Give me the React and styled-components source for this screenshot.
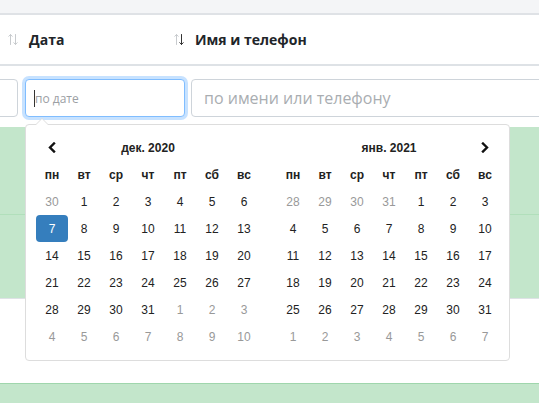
import React from "react";
import styled, { createGlobalStyle } from "styled-components";

const Global = createGlobalStyle`
  html, body { margin: 0; padding: 0; background: #fff; }
  body { overflow: hidden; width: 539px; height: 403px; font-family: "Open Sans", "Noto Sans", sans-serif; color: #212529; }
  * { box-sizing: border-box; }
`;

const Page = styled.div`
  width: 539px;
  height: 403px;
  overflow: hidden;
  position: relative;
`;

const TopBand = styled.div`
  height: 15px;
  background: #f4f5f7;
  border-bottom: 2px solid #dfe2e6;
`;

const HeadRow = styled.div`
  display: flex;
  align-items: center;
  height: 51px;
  padding-left: 8px;
  border-bottom: 2px solid #dee2e6;
`;

const HeadCell = styled.div`
  display: flex;
  align-items: center;
  gap: 11px;
  width: ${(p) => (p.$w ? `${p.$w}px` : "auto")};
  font-size: 14px;
  font-weight: 700;
  color: #212529;
`;

const FilterRow = styled.div`
  display: flex;
  align-items: flex-start;
  padding: 13px 0 10px;
  margin-left: -22px;
  gap: 7px;
`;

const Input = styled.input`
  height: 38px;
  width: ${(p) => (p.$w ? `${p.$w}px` : "auto")};
  flex: ${(p) => (p.$grow ? "0 0 400px" : "none")};
  border: 1px solid #ced4da;
  border-radius: 4px;
  padding: 0 12px;
  font-family: "Open Sans", sans-serif;
  font-size: 16px;
  color: #495057;
  background: #fff;
  outline: none;
  &::placeholder { color: #a9adb1; }
`;

const DateWrap = styled.div`
  position: relative;
  width: 160px;
  margin-right: -1px;
`;

const DateInput = styled.input`
  width: 160px;
  height: 38px;
  border: 1px solid #80bdff;
  border-radius: 4px;
  box-shadow: 0 0 0 3px rgba(0, 123, 255, 0.22);
  padding: 0 9px;
  font-family: "Open Sans", sans-serif;
  font-size: 12px;
  outline: none;
  caret-color: transparent;
  &::placeholder { color: #9ca0a4; }
`;

const Caret = styled.span`
  position: absolute;
  left: 9px;
  top: 11px;
  width: 1px;
  height: 17px;
  background: #333;
`;

const Picker = styled.div`
  position: absolute;
  top: 45px;
  left: 0;
  width: 485px;
  background: #fff;
  border: 1px solid #ddd;
  border-radius: 4px;
  display: flex;
  gap: 17px;
  padding: 9px 8px 10px 10px;
  z-index: 5;
  font-family: "Liberation Sans", Arial, sans-serif;
  font-size: 12px;
  color: #222;
  &::before {
    content: "";
    position: absolute;
    top: -7px;
    left: 9px;
    border-left: 7px solid transparent;
    border-right: 7px solid transparent;
    border-bottom: 7px solid #ddd;
  }
  &::after {
    content: "";
    position: absolute;
    top: -6px;
    left: 10px;
    border-left: 6px solid transparent;
    border-right: 6px solid transparent;
    border-bottom: 6px solid #fff;
  }
`;

const Month = styled.div`
  display: grid;
  grid-template-columns: repeat(7, 32px);
  grid-auto-rows: 27px;
  width: 224px;
`;

const TitleRow = styled.div`
  grid-column: 1 / -1;
  display: grid;
  grid-template-columns: 32px 1fr 32px;
  align-items: center;
  text-align: center;
  font-weight: 700;
`;

const NavBtn = styled.span`
  display: flex;
  align-items: center;
  justify-content: center;
`;

const Wd = styled.div`
  display: flex;
  align-items: center;
  justify-content: center;
  font-weight: 700;
`;

const Day = styled.div`
  display: flex;
  align-items: center;
  justify-content: center;
  border-radius: 4px;
  color: ${(p) => (p.$sel ? "#fff" : p.$off ? "#999" : "#222")};
  background: ${(p) => (p.$sel ? "#357ebd" : "transparent")};
`;

const BodyRow = styled.div`
  height: ${(p) => p.$h}px;
  background: ${(p) => (p.$green ? "#c3e6cb" : "#fff")};
  border-top: ${(p) => (p.$line ? `1px solid ${p.$line}` : "none")};
`;

const SortIcon = ({ active }) => (
  <svg width="10" height="13" viewBox="0 0 10 13" fill="none" strokeWidth="1" strokeLinecap="round">
    <g stroke="#c8cbce">
      <path d="M2.5 1.5v10M0.8 3.3L2.5 1.5 4.2 3.3" />
    </g>
    <g stroke={active ? "#333" : "#c8cbce"}>
      <path d="M7.5 1.5v10M5.8 9.7L7.5 11.5 9.2 9.7" />
    </g>
  </svg>
);

const Chevron = ({ dir }) => (
  <svg width="8" height="11" viewBox="0 0 8 11" fill="none">
    <path
      d={dir === "left" ? "M6 1.5L2 5.5l4 4" : "M2 1.5l4 4-4 4"}
      stroke="#111"
      strokeWidth="2.4"
      strokeLinecap="square"
    />
  </svg>
);

const WEEK = ["пн", "вт", "ср", "чт", "пт", "сб", "вс"];

const dec = [
  [30, 1, 2, 3, 4, 5, 6],
  [7, 8, 9, 10, 11, 12, 13],
  [14, 15, 16, 17, 18, 19, 20],
  [21, 22, 23, 24, 25, 26, 27],
  [28, 29, 30, 31, 1, 2, 3],
  [4, 5, 6, 7, 8, 9, 10],
];
const jan = [
  [28, 29, 30, 31, 1, 2, 3],
  [4, 5, 6, 7, 8, 9, 10],
  [11, 12, 13, 14, 15, 16, 17],
  [18, 19, 20, 21, 22, 23, 24],
  [25, 26, 27, 28, 29, 30, 31],
  [1, 2, 3, 4, 5, 6, 7],
];

const Calendar = ({ title, rows, left, right, sel }) => (
  <Month>
    <TitleRow>
      <NavBtn>{left && <Chevron dir="left" />}</NavBtn>
      <span>{title}</span>
      <NavBtn>{right && <Chevron dir="right" />}</NavBtn>
    </TitleRow>
    {WEEK.map((w) => (
      <Wd key={w}>{w}</Wd>
    ))}
    {rows.map((r, ri) =>
      r.map((d, di) => {
        const off = (ri === 0 && d > 20) || (ri >= 4 && d < 15);
        return (
          <Day key={`${ri}-${di}`} $off={off} $sel={sel && ri === 1 && di === 0}>
            {d}
          </Day>
        );
      })
    )}
  </Month>
);

export default function App() {
  return (
    <Page>
      <Global />
      <TopBand />
      <HeadRow>
        <HeadCell $w={166}>
          <SortIcon />
          Дата
        </HeadCell>
        <HeadCell>
          <SortIcon active />
          Имя и телефон
        </HeadCell>
      </HeadRow>
      <FilterRow>
        <Input $w={40} />
        <DateWrap>
          <DateInput placeholder="по дате" />
          <Caret />
          <Picker>
            <Calendar title="дек. 2020" rows={dec} left sel />
            <Calendar title="янв. 2021" rows={jan} right />
          </Picker>
        </DateWrap>
        <Input $grow placeholder="по имени или телефону" />
      </FilterRow>
      <BodyRow $green $h={87} />
      <BodyRow $green $h={84} $line="#b1dfbb" />
      <BodyRow $h={85} $line="#dee2e6" />
      <BodyRow $green $h={40} $line="#9fd6ac" />
    </Page>
  );
}
